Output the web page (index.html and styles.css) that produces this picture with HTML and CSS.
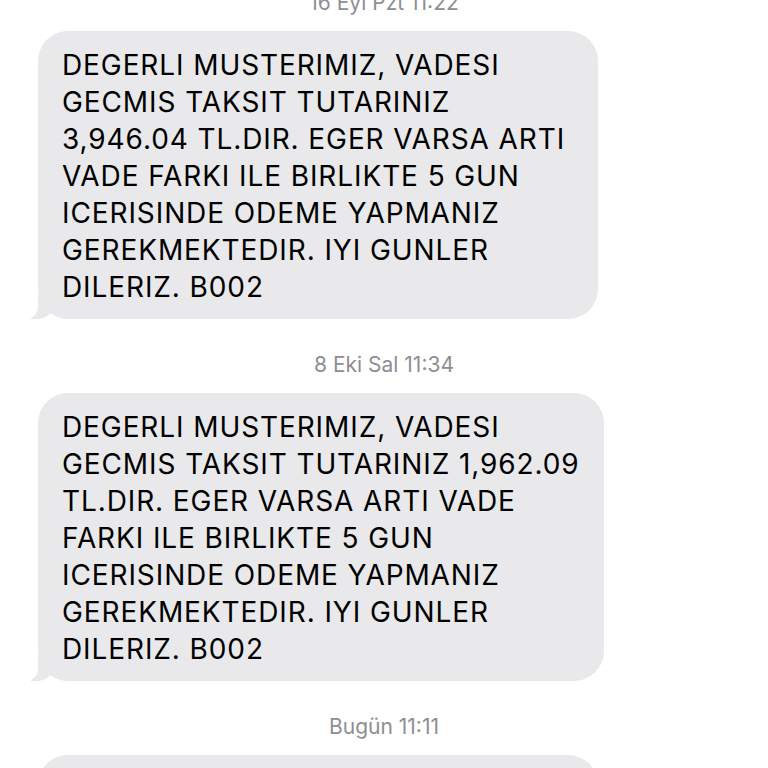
FILE: index.html
```html
<!DOCTYPE html>
<html lang="tr">
<head>
  <meta charset="UTF-8" />
  <meta name="viewport" content="width=device-width, initial-scale=1.0"/>
  <title>Mesajlar</title>
  <link rel="stylesheet" href="styles.css">
</head>
<body>
  <div id="thread">
    <div class="stamp first">16 Eyl Pzt 11:22</div>
    <div class="bubble one">
      DEGERLI MUSTERIMIZ, VADESI<br>
      GECMIS TAKSIT TUTARINIZ<br>
      3,946.04 TL.DIR. EGER VARSA ARTI<br>
      VADE FARKI ILE BIRLIKTE 5 GUN<br>
      ICERISINDE ODEME YAPMANIZ<br>
      GEREKMEKTEDIR. IYI GUNLER<br>
      DILERIZ. B002
    </div>

    <div class="stamp">8 Eki Sal 11:34</div>
    <div class="bubble two">
      DEGERLI MUSTERIMIZ, VADESI<br>
      GECMIS TAKSIT TUTARINIZ 1,962.09<br>
      TL.DIR. EGER VARSA ARTI VADE<br>
      FARKI ILE BIRLIKTE 5 GUN<br>
      ICERISINDE ODEME YAPMANIZ<br>
      GEREKMEKTEDIR. IYI GUNLER<br>
      DILERIZ. B002
    </div>

    <div class="stamp">Bugün 11:11</div>
    <div class="bubble three">
      DEGERLI MUSTERIMIZ, VADESI<br>
      GECMIS TAKSIT TUTARINIZ
    </div>
  </div>
</body>
</html>
```

FILE: styles.css
```css
body {
  margin: 0;
  background-color: white;
  font-family: Inter, "Noto Sans", sans-serif;
  overflow: hidden;
  height: 768px;
}

#thread {
  display: flex;
  flex-direction: column;
  align-items: flex-start;
  margin-top: -9px;
}

.stamp {
  align-self: center;
  font-size: 21px;
  line-height: 24px;
  color: #8e8e93;
  margin: 34px 0 16px;
}
.stamp.first {
  margin-top: 0;
}

.bubble {
  position: relative;
  margin-left: 38px;
  padding: 16px 24px 13px;
  background-color: #e9e9eb;
  border-radius: 30px;
  color: black;
  font-size: 28px;
  line-height: 37px;
  letter-spacing: 0.9px;
  white-space: nowrap;
  box-sizing: border-box;
}
.bubble.one {
  width: 560px;
}
.bubble.two {
  width: 566px;
}
.bubble.three {
  width: 560px;
}

/* tail at the bottom-left corner */
.bubble::before,
.bubble::after {
  content: "";
  position: absolute;
  bottom: 0;
  height: 24px;
}
.bubble::before {
  left: -7px;
  width: 24px;
  background-color: #e9e9eb;
  border-bottom-right-radius: 18px;
}
.bubble::after {
  left: -20px;
  width: 20px;
  background-color: white;
  border-bottom-right-radius: 12px;
}
.bubble.three::before,
.bubble.three::after {
  display: none;
}
```
